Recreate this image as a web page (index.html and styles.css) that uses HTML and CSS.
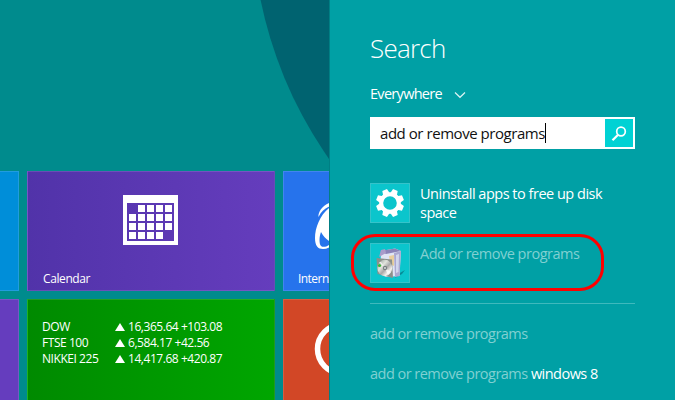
FILE: index.html
```html
<!DOCTYPE html>
<html lang="en">
<head>
<meta charset="utf-8">
<title>Start screen search</title>
<link rel="stylesheet" href="styles.css">
</head>
<body>
<div class="screen">
  <main class="start">
    <svg class="backdrop" width="329" height="171" viewBox="0 0 329 171" aria-hidden="true"><circle cx="677" cy="-85" r="425" fill="#006370"/></svg>
    <div class="tiles">
      <div class="tile blue"></div>
      <div class="tile calendar">
        <svg width="55" height="50" viewBox="0 0 55 50" shape-rendering="crispEdges" aria-hidden="true">
          <path fill="#fff" fill-rule="evenodd" d="M0 0H55V50H0ZM4 8V46H51V8Z"/>
          <path fill="#fff" d="M15 10h7v7h-7zM24 10h7v7h-7zM33 10h7v7h-7zM42 10h7v7h-7zM6 19h7v7h-7zM15 19h7v7h-7zM24 19h7v7h-7zM33 19h7v7h-7zM42 19h7v7h-7zM6 28h7v7h-7zM15 28h7v7h-7zM24 28h7v7h-7zM33 28h7v7h-7zM42 28h7v7h-7zM6 37h7v7h-7zM15 37h7v7h-7zM24 37h7v7h-7zM33 37h7v7h-7z"/>
        </svg>
        <span class="label">Calendar</span>
      </div>
      <div class="tile internet">
        <svg width="45" height="118" viewBox="0 0 45 118" aria-hidden="true">
          <path fill="#fff" d="M45 31C38 34 34 40 34.500 45C37 40 40 37 45 34.500V36C36 43 31 56 31 66C31 74 34 77 39 77C41 77 43 76.500 45 75.500V73C42 75 39 75.500 37 74C35 72 35 65 37 60C39 64 42 67 45 69Z"/>
        </svg>
        <span class="label">Intern</span>
      </div>
      <div class="tile violet"></div>
      <div class="tile finance">
        <div class="quotes">
          <span>DOW</span><i class="up"></i><span>16,365.64 +103.08</span>
          <span>FTSE 100</span><i class="up"></i><span>6,584.17 +42.56</span>
          <span>NIKKEI 225</span><i class="up"></i><span>14,417.68 +420.87</span>
        </div>
      </div>
      <div class="tile orange">
        <svg width="45" height="100" viewBox="0 0 45 100" aria-hidden="true"><circle cx="58" cy="49" r="24.500" fill="none" stroke="#fff" stroke-width="5.500"/></svg>
      </div>
    </div>
  </main>
  <aside class="panel">
    <h1>Search</h1>
    <div class="scope"><span>Everywhere</span>
      <svg width="12" height="8" viewBox="0 0 12 8" aria-hidden="true"><path d="M1 1.500L6 6.300L11 1.500" fill="none" stroke="#d9f3f3" stroke-width="1.200"/></svg>
    </div>
    <div class="box">
      <span class="query">add or remove programs</span><i class="caret"></i>
      <div class="go"><svg width="28" height="28" viewBox="0 0 28 28" fill="none" stroke="#fff" aria-hidden="true"><circle cx="16" cy="12.500" r="4.300" stroke-width="1.700"/><path d="M12.800 16L7.500 21.300" stroke-width="2.200"/></svg></div>
    </div>
    <div class="result">
      <div class="icon">
        <svg width="38" height="38" viewBox="-19 -19 38 38" aria-hidden="true">
          <g fill="#fff"><path id="tooth" d="M-3.600 -9L-2.500 -14H2.500L3.600 -9Z" transform="rotate(22.500)"/>
          <use href="#tooth" transform="rotate(45)"/><use href="#tooth" transform="rotate(90)"/><use href="#tooth" transform="rotate(135)"/><use href="#tooth" transform="rotate(180)"/><use href="#tooth" transform="rotate(225)"/><use href="#tooth" transform="rotate(270)"/><use href="#tooth" transform="rotate(315)"/></g>
          <circle r="8.800" fill="none" stroke="#fff" stroke-width="4"/>
        </svg>
      </div>
      <p class="apps">Uninstall apps to free up disk<br>space</p>
    </div>
    <div class="result chosen">
      <div class="icon">
        <svg width="38" height="38" viewBox="0 0 38 38" aria-hidden="true">
          <defs><linearGradient id="disc" x1="0" y1="0" x2="1" y2="1"><stop offset="0" stop-color="#85928c"/><stop offset=".35" stop-color="#e1e4dd"/><stop offset=".55" stop-color="#aaa8a8"/><stop offset=".75" stop-color="#f5f3ed"/><stop offset="1" stop-color="#8c8b90"/></linearGradient></defs>
          <path d="M27 30L34 26L31 30L24 34Z" fill="#078c98"/>
          <path d="M10 7L24 4.500L30 7L28.500 32L15 33L9 29Z" fill="#dfe4f4"/>
          <path d="M9 7L24 4.500L30 7L15 10Z" fill="#8b83b8"/>
          <path d="M10 6L14 5L15 9L8 13Z" fill="#a99bca"/>
          <path d="M23 9L30 7L28.500 32L24 33Z" fill="#aaa8d0"/>
          <path d="M25 11L28 10L27.500 28L25 29Z" fill="#d2d6ed"/>
          <path d="M18 12L23 11V22L19 20Z" fill="#e9cf9d"/>
          <path d="M5.500 14L21 15.500L22 34L6.500 30Z" fill="#8b908b"/>
          <ellipse cx="13.800" cy="24" rx="7.400" ry="8.300" fill="url(#disc)"/>
          <path d="M8 18L14 24L10 18ZM14 24L20 28L17 31Z" fill="#fff" opacity=".75"/>
          <circle cx="14" cy="24" r="2.200" fill="#777f80"/><circle cx="14" cy="24" r=".9" fill="#e1e6e4"/>
          <circle cx="8.500" cy="21.500" r="1.600" fill="#35ba37"/>
        </svg>
      </div>
      <p>Add or remove programs</p>
      <div class="ring"></div>
    </div>
    <hr>
    <p class="hint">add or remove programs</p>
    <p class="hint">add or remove programs <b>windows 8</b></p>
  </aside>
</div>
</body>
</html>
```
FILE: styles.css
```css
* { box-sizing: border-box; }
body { margin: 0; font-family: "Open Sans", "Noto Sans", sans-serif; color: #fff; }
.screen { display: grid; grid-template-columns: 329px 346px; width: 675px; height: 400px; overflow: hidden; }
.start { position: relative; background: #008b8d; padding-top: 171px; overflow: hidden; min-width: 0; height: 400px; }
.backdrop { position: absolute; top: 0; left: 0; }
.tiles { display: grid; grid-template-columns: 19px 248px 46px; grid-template-rows: 120px 120px; gap: 8px; }
.tile { position: relative; border: 1px solid rgba(255,255,255,.13); overflow: hidden; font-size: 12px; line-height: 16px; }
.blue { background: #008ed9; border-left: 0; }
.calendar { background: linear-gradient(90deg, #5133a9, #653dbd); padding: 23px 0 0 95px; }
.internet { background: #2673ec; border-right: 0; }
.violet { background: #653dbe; border-left: 0; }
.finance { background: linear-gradient(90deg, #008a00, #00a600); padding: 19px 0 0 14px; }
.orange { background: #d24726; border-right: 0; }
.tile svg { display: block; }
.label { position: absolute; left: 15px; bottom: 3px; white-space: nowrap; letter-spacing: -.4px; }
.internet .label { left: 14px; letter-spacing: -.55px; }
.quotes { display: grid; grid-template-columns: 73px 13px auto; letter-spacing: -.45px; white-space: nowrap; align-items: center; }
.up { width: 10px; height: 8px; background: #fff; clip-path: polygon(50% 0, 100% 100%, 0 100%); }
.panel { background: #00a0a5; border-left: 1px solid #007f84; padding: 30px 40px 0; height: 400px; }
h1 { margin: 0; font-size: 26px; font-weight: 350; line-height: 36px; letter-spacing: -.75px; }
.scope { display: flex; align-items: center; gap: 12px; margin-top: 16px; height: 22px; font-size: 14.500px; letter-spacing: -.7px; }
.scope svg { position: relative; top: 2px; }
.box { display: flex; align-items: center; width: 265px; height: 32px; margin-top: 13px; padding: 2px 2px 2px 10px; background: #fff; color: #111; font-size: 15px; }
.query { letter-spacing: -.45px; white-space: nowrap; }
.caret { width: 1px; height: 20px; background: #000; }
.go { width: 28px; height: 28px; margin-left: auto; background: #00d2d4; }
.go svg { display: block; }
.result { display: flex; position: relative; gap: 10px; height: 40px; margin-top: 34px; }
.chosen { margin-top: 20px; color: #80d0d2; }
.icon { flex: none; width: 40px; height: 40px; border: 1px solid #35c3ca; background: #0bc5cc; }
.icon svg { display: block; }
.result p { margin: 1px 0 0; font-size: 14.500px; line-height: 19px; letter-spacing: -.49px; white-space: nowrap; }
.ring { position: absolute; left: -19px; top: -9px; width: 253px; height: 57px; border: 3px solid #f00; border-radius: 24px; }
hr { width: 265px; height: 1px; margin: 20px 0 0; border: 0; background: #3fb9bd; }
.hint { margin: 20px 0 0; height: 20px; font-size: 14.500px; line-height: 20px; letter-spacing: -.52px; color: #80d0d2; white-space: nowrap; }
.hint b { font-weight: 400; color: #fff; }
```
